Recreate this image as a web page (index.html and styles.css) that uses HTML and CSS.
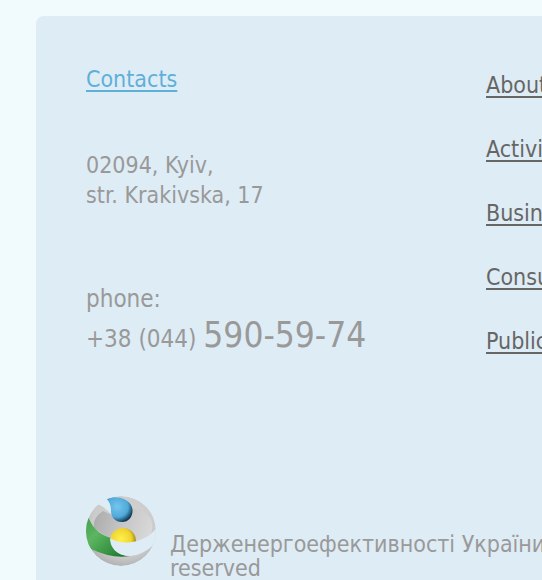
FILE: index.html
```
<!DOCTYPE html>
<html lang="en">
<head>
    <meta charset="UTF-8">
    <meta name="viewport" content="width=device-width, initial-scale=1.0">
    <title>Contacts</title>

    <link rel="stylesheet" href="styles.css">
</head>
<body>
    <footer class="footer">
        <div class="footerTop">
            <div class="contacts">
                <a class="contactsLink" href="/contacts">Contacts</a>
                <p class="address">02094, Kyiv,<br>str. Krakivska, 17</p>
                <div class="phone">
                    <p>phone:</p>
                    <p class="phoneLine">+38 (044) <span class="phoneNumber">590-59-74</span></p>
                </div>
            </div>
            <nav class="menu">
                <a href="/about">About us</a>
                <a href="/activities">Activities</a>
                <a href="/business">Business</a>
                <a href="/consulting">Consulting</a>
                <a href="/public">Public</a>
            </nav>
        </div>
        <div class="copyright">
            <svg class="logo" viewBox="0 0 70 70" aria-hidden="true">
                <defs>
                    <radialGradient id="silver" cx="55%" cy="40%" r="62%">
                        <stop offset="0" stop-color="#d6d6d7"/>
                        <stop offset="0.75" stop-color="#cbcbcc"/>
                        <stop offset="1" stop-color="#b0b0b1"/>
                    </radialGradient>
                    <linearGradient id="inner" x1="0" y1="0.3" x2="1" y2="0.5">
                        <stop offset="0" stop-color="#acacad"/>
                        <stop offset="0.5" stop-color="#c6c6c7"/>
                        <stop offset="1" stop-color="#d8d8d9"/>
                    </linearGradient>
                    <radialGradient id="blue" cx="40%" cy="38%" r="65%">
                        <stop offset="0" stop-color="#74c5ed"/>
                        <stop offset="0.65" stop-color="#4fa9d8"/>
                        <stop offset="1" stop-color="#123a55"/>
                    </radialGradient>
                    <radialGradient id="yellow" cx="42%" cy="42%" r="62%">
                        <stop offset="0" stop-color="#fff04e"/>
                        <stop offset="0.65" stop-color="#f0d42c"/>
                        <stop offset="1" stop-color="#8f7a1c"/>
                    </radialGradient>
                    <linearGradient id="green" x1="0" y1="0" x2="1" y2="1">
                        <stop offset="0" stop-color="#3c9f48"/>
                        <stop offset="0.35" stop-color="#5db560"/>
                        <stop offset="0.7" stop-color="#369342"/>
                        <stop offset="1" stop-color="#16672b"/>
                    </linearGradient>
                    <clipPath id="ball"><circle cx="35" cy="35" r="35"/></clipPath>
                </defs>
                <g clip-path="url(#ball)">
                    <circle cx="35" cy="35" r="35" fill="url(#silver)"/>
                    <path d="M8 32C7 24 11 19 17 15L26 19C34 10 56 10 64 22C68 30 66 38 62 43C46 50 26 46 8 32Z" fill="url(#inner)"/>
                    <path d="M12 8L22 1L28 8L26 19Q20 12 12 8Z" fill="#deecf5"/>
                    <path d="M21 3C29 -1 41 2 45 9C49 16 45 26 36 26C29 26 25 21 25 15C25 10 24 7 21 3Z" fill="url(#blue)"/>
                    <circle cx="37" cy="45" r="13" fill="url(#yellow)"/>
                    <path d="M0 18L3 23C8 34 15 39 25 42C25 52 31 60 44 60Q26 63 5 53L0 49Z" fill="url(#green)"/>
                    <path d="M24 42C34 49 56 49 70 33V46L66 50C60 56 51 60 42 60C31 59 24 52 24 42Z" fill="#deecf5"/>
                </g>
            </svg>
            <p class="copyrightText">Держенергоефективності України. All rights<br>reserved</p>
        </div>
    </footer>
</body>
</html>
```
FILE: styles.css
```
body{
    margin: 0;
    background-color: #f1fafd;
    color: #999;
    font-family: "DejaVu Sans Condensed", "DejaVu Sans", sans-serif;
    font-size: 23px;
    line-height: 30px;
    overflow: hidden;
}

p{
    margin: 0;
}

a{
    text-decoration-thickness: 2px;
    text-underline-offset: 3px;
}

.footer{
    margin: 16px 0 0 36px;
    padding: 48px 0 0 50px;
    background-color: #deecf5;
    border-radius: 8px 0 0 0;
}

.footerTop{
    display: flex;
}

.contacts{
    flex: 0 0 400px;
}

.contactsLink{
    color: #5eb0d9;
}

.address{
    margin-top: 56px;
}

.phone{
    margin-top: 74px;
    font-size: 24px;
}

.phoneLine{
    line-height: 42px;
}

.phoneNumber{
    font-size: 35px;
}

.menu{
    display: flex;
    flex-direction: column;
    gap: 34px;
    padding-top: 6px;
    white-space: nowrap;
}

.menu a{
    color: #666;
}

.copyright{
    display: flex;
    gap: 14px;
    margin-top: 136px;
}

.logo{
    flex: none;
    width: 70px;
    height: 70px;
}

.copyrightText{
    padding-top: 36px;
    line-height: 24px;
    white-space: nowrap;
}
```
